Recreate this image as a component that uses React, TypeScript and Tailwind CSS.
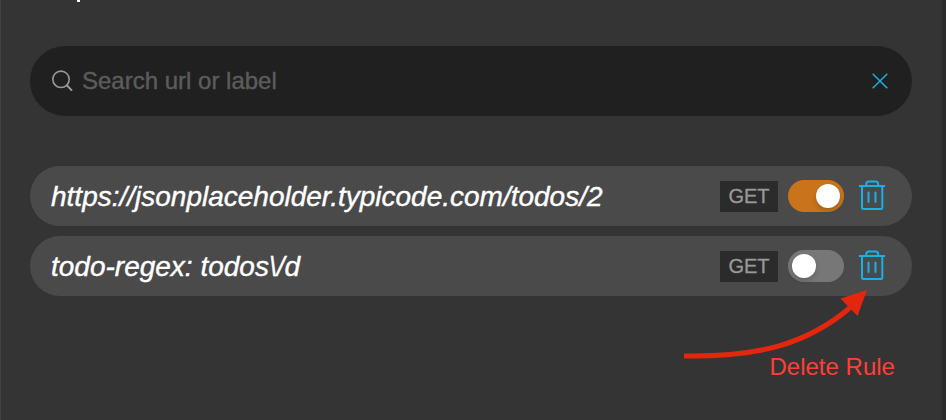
import React from "react";

function TrashIcon() {
  return (
    <svg className="ml-[14px] block h-[32px] w-[28px] shrink-0" viewBox="0 0 28 32" fill="none" stroke="#1ab0e6" strokeWidth="2" strokeLinecap="round" strokeLinejoin="round">
      <path d="M1.7 6H26.3M4 6V27.5Q4 29 5.5 29H23Q24.3 29 24.3 27.5V6M8.3 6V4Q8.3 1.4 10.8 1.4H17.7Q20.2 1.4 20.2 4V6" />
      <path d="M10.5 12.5V22M17.5 12.5V22" />
    </svg>
  );
}

function Rule({ label, on }: { label: string; on: boolean }) {
  return (
    <div className="flex h-[60px] items-center rounded-full bg-[#4a4a4a] pl-[21px] pr-[26px]">
      <span className="flex-1 whitespace-nowrap pt-[1px] text-[28px] italic leading-[32px] text-white [-webkit-text-stroke:0.4px_white]">{label}</span>
      <span className="mt-[1px] flex h-[31px] w-[58px] items-center justify-center bg-[#2b2b2b] pb-[2px] text-[20px] leading-none text-[#999] [-webkit-text-stroke:0.3px_#999]">GET</span>
      <span className={`ml-[10px] flex h-[32px] w-[56px] items-center rounded-full px-[4px] ${on ? "justify-end bg-[#c9741a]" : "justify-start bg-[#777]"}`}>
        <span className="h-[24px] w-[24px] rounded-full bg-white shadow-[0_3px_5px_rgba(0,35,11,0.2)]" />
      </span>
      <TrashIcon />
    </div>
  );
}

export default function App() {
  return (
    <div className="relative h-[420px] w-[946px] overflow-hidden border-l border-r-4 border-l-[#444] border-r-[#2b2b2b] bg-[#343434] font-['Liberation_Sans',Arial,sans-serif]">
      <div className="h-[46px] pl-[76px]">
        <div className="h-[2px] w-[3px] bg-white" />
      </div>
      <div className="ml-[29px] w-[882px]">
        <div className="flex h-[70px] items-center rounded-full bg-[#202020] pl-[22px] pr-[24px]">
          <svg className="h-[22px] w-[22px] shrink-0" viewBox="0 0 22 22" fill="none" stroke="#999" strokeWidth="1.6">
            <circle cx="9" cy="9.3" r="8.2" />
            <path d="M14.8 15.2L20 20.6" strokeWidth="2" />
          </svg>
          <span className="ml-[8px] flex-1 text-[24px] leading-[30px] text-[#5c5c5c] [-webkit-text-stroke:0.4px_#5c5c5c]">Search url or label</span>
          <svg className="h-[16px] w-[16px]" viewBox="0 0 16 16" stroke="#1ab0e6" strokeWidth="1.5">
            <path d="M.7 .7L15.3 15.3M15.3 .7L.7 15.3" />
          </svg>
        </div>
        <div className="mt-[50px] flex flex-col gap-[10px]">
          <Rule label="https://jsonplaceholder.typicode.com/todos/2" on />
          <Rule label="todo-regex: todos\/d" on={false} />
        </div>
      </div>
      <svg className="absolute left-[679px] top-[280px] h-[90px] w-[200px]" viewBox="680 280 200 90" fill="none">
        <path d="M684 356C755 357 806 346 852 306" stroke="#e4260f" strokeWidth="5" />
        <path d="M867 290L840.5 298.5L857.5 316Z" fill="#e4260f" />
      </svg>
      <span className="absolute left-[768.5px] top-[353px] whitespace-nowrap text-[24px] leading-[28px] text-[#ff3f35]">Delete Rule</span>
    </div>
  );
}
